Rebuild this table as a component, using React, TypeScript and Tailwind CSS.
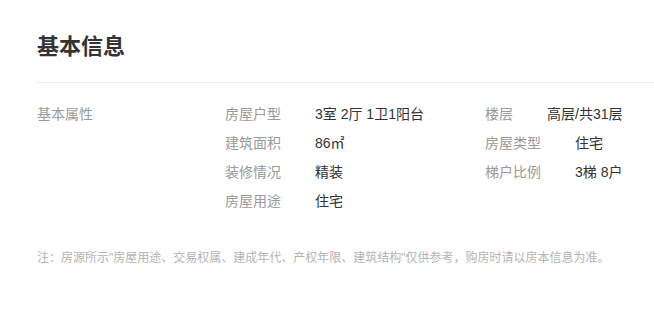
const leftItems = [
  { label: '房屋户型', value: '3室 2厅 1卫1阳台' },
  { label: '建筑面积', value: '86㎡' },
  { label: '装修情况', value: '精装' },
  { label: '房屋用途', value: '住宅' },
];

const rightItems = [
  { label: '楼层', value: '高层/共31层' },
  { label: '房屋类型', value: '住宅' },
  { label: '梯户比例', value: '3梯 8户' },
];

function InfoRow({ label, value }: { label: string; value: string }) {
  return (
    <div className="flex h-[29px] items-center">
      <span className="mr-[34px] text-[#9a9a9a]">{label}</span>
      <span className="text-[#333]">{value}</span>
    </div>
  );
}

export default function App() {
  return (
    <div className="min-h-screen bg-white pl-[37px] pt-[32px] font-['Liberation_Sans','Noto_Sans_CJK_SC',sans-serif]">
      <h2 className="text-[22px] font-bold leading-[30px] text-[#333]">基本信息</h2>
      <div className="mt-[20px] h-px bg-[#eeeeee]" />
      <div className="mt-[17px] flex text-[14px] leading-[29px]">
        <div className="w-[188px] h-[29px] flex items-center text-[#9a9a9a]">基本属性</div>
        <div className="flex w-[260px] flex-col">
          {leftItems.map((item) => (
            <InfoRow key={item.label} label={item.label} value={item.value} />
          ))}
        </div>
        <div className="flex flex-col">
          {rightItems.map((item) => (
            <InfoRow key={item.label} label={item.label} value={item.value} />
          ))}
        </div>
      </div>
      <p className="mt-[32px] text-[12px] leading-[20px] text-[#b4b4b4]">
        注：房源所示"房屋用途、交易权属、建成年代、产权年限、建筑结构"仅供参考，购房时请以房本信息为准。
      </p>
    </div>
  );
}
